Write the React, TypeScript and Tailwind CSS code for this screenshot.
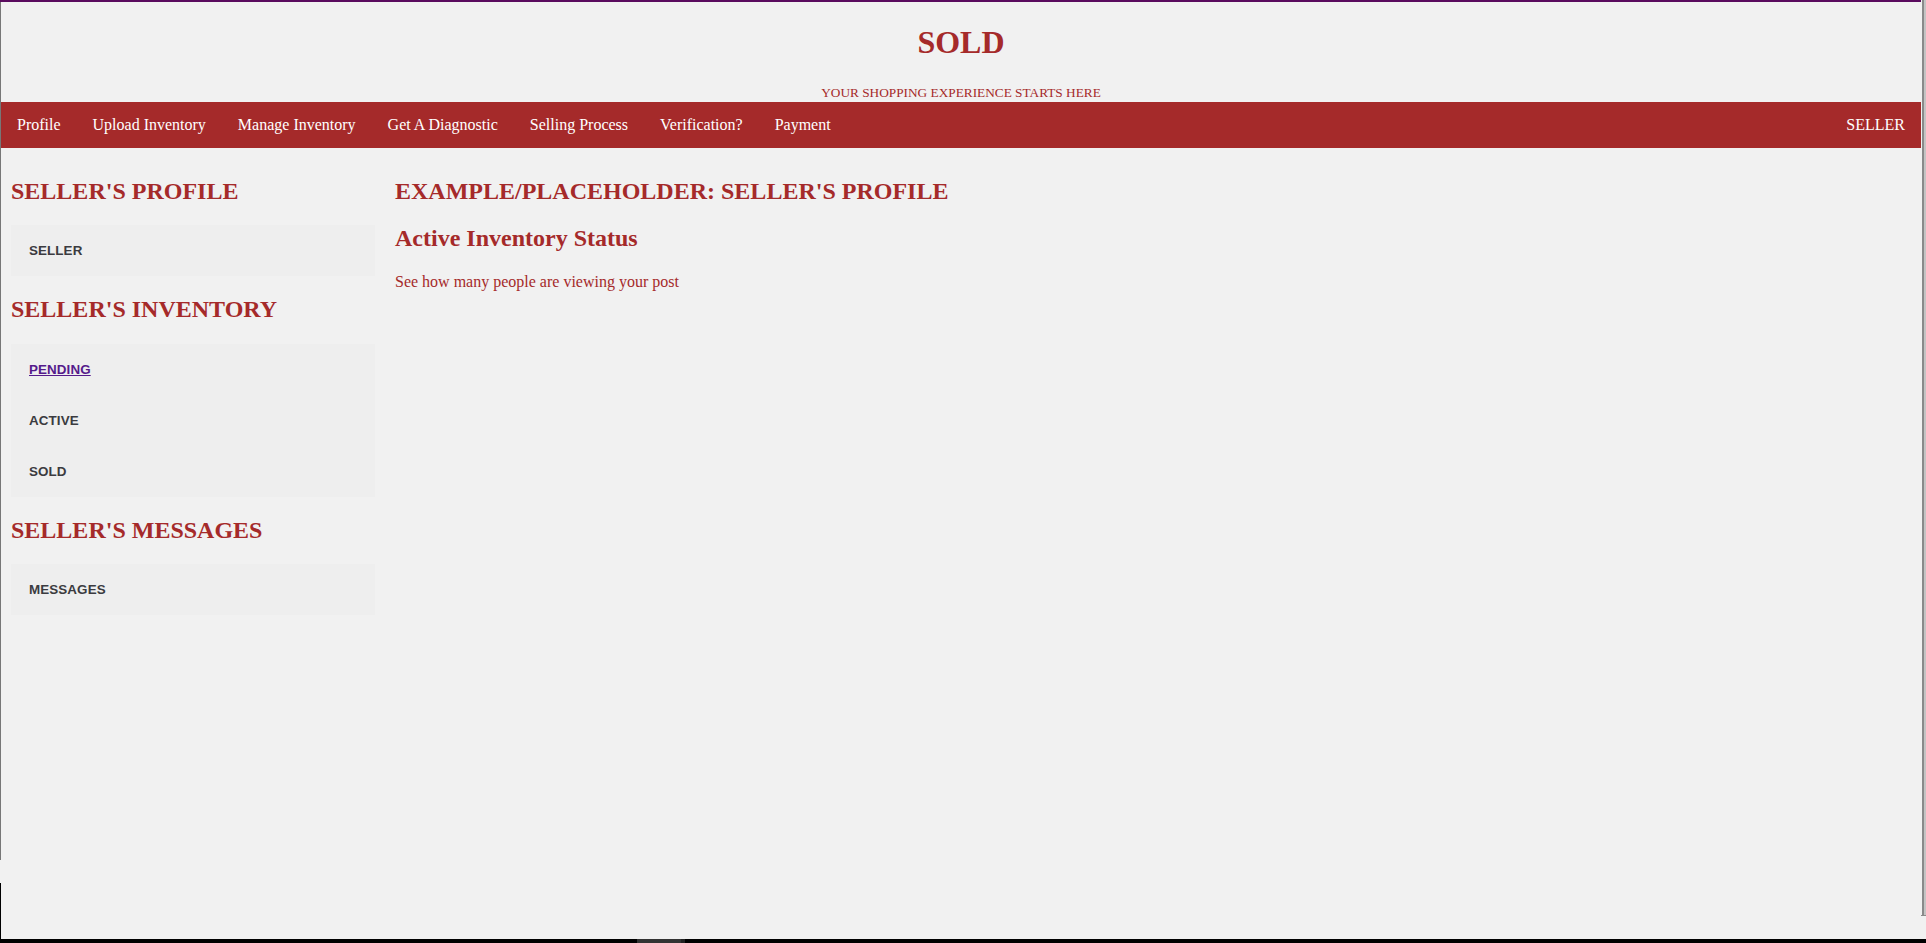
import React from "react";

const NAV_LINKS = [
	"Profile",
	"Upload Inventory",
	"Manage Inventory",
	"Get A Diagnostic",
	"Selling Process",
	"Verification?",
	"Payment",
];

type Section = {
	title: string;
	items: { label: string; visited?: boolean }[];
};

const SECTIONS: Section[] = [
	{ title: "SELLER'S PROFILE", items: [{ label: "SELLER" }] },
	{
		title: "SELLER'S INVENTORY",
		items: [{ label: "PENDING", visited: true }, { label: "ACTIVE" }, { label: "SOLD" }],
	},
	{ title: "SELLER'S MESSAGES", items: [{ label: "MESSAGES" }] },
];

const serif = "font-['Liberation_Serif','Times_New_Roman',serif]";

const SidebarSection: React.FC<{ section: Section }> = ({ section }) => (
	<div>
		<h2 className="my-[19.9px] text-[24px] leading-[27.6px] font-bold text-[#a52a2a]">
			{section.title}
		</h2>
		<ul className="bg-[#eeeeee]">
			{section.items.map((item) => (
				<li key={item.label} className="h-[51px] flex items-center pl-[18px]">
					<a
						href="#"
						className={
							"font-['Liberation_Sans',Arial,sans-serif] text-[13.4px] leading-[15px] font-bold tracking-[0.1px] " +
							(item.visited ? "text-[#551a8b] underline" : "text-[#3b3b40]")
						}
					>
						{item.label}
					</a>
				</li>
			))}
		</ul>
	</div>
);

export default function App() {
	return (
		<div className={`w-[1926px] h-[943px] bg-[#f1f1f1] flex flex-col overflow-hidden ${serif}`}>
			<div className="flex flex-1 min-h-0">
				{/* left window edge */}
				<div className="w-px flex flex-col">
					<div className="h-[2px] bg-[#5a0b5e]" />
					<div className="h-[858px] bg-[#777]" />
					<div className="h-[23px]" />
					<div className="flex-1 bg-black" />
				</div>

				<div className="w-[1920px] flex flex-col border-t-2 border-[#5a0b5e]">
					<header className="pt-[22px] pb-[2px] text-center text-[#a52a2a]">
						<h1 className="text-[32px] leading-[37px] font-bold">SOLD</h1>
						<p className="mt-[24px] text-[13.3px] leading-[15px]">
							YOUR SHOPPING EXPERIENCE STARTS HERE
						</p>
					</header>

					<nav className="h-[46px] bg-[#a52a2a] flex text-white text-[16px]">
						{NAV_LINKS.map((link) => (
							<a key={link} href="#" className="px-4 leading-[46px]">
								{link}
							</a>
						))}
						<a href="#" className="ml-auto px-4 leading-[46px]">
							SELLER
						</a>
					</nav>

					<div className="flex pt-[10px]">
						<aside className="w-[384px] px-[10px]">
							{SECTIONS.map((s) => (
								<SidebarSection key={s.title} section={s} />
							))}
						</aside>
						<main className="flex-1 pl-[10px] text-[#a52a2a]">
							<h2 className="my-[19.9px] text-[24px] leading-[27.6px] font-bold">
								EXAMPLE/PLACEHOLDER: SELLER'S PROFILE
							</h2>
							<h2 className="my-[19.9px] text-[24px] leading-[27.6px] font-bold">
								Active Inventory Status
							</h2>
							<p className="text-[16px] leading-[18.4px]">See how many people are viewing your post</p>
						</main>
					</div>
				</div>

				{/* right window edge */}
				<div className="w-[5px] flex flex-col">
					<div className="h-[915px] flex">
						<div className="w-px bg-[#f1f1f1]" />
						<div className="w-[2px] bg-[#8a8a8a]" />
						<div className="w-[2px] bg-[#c4c4c4]" />
					</div>
					<div className="h-px bg-[#8a8a8a]" />
				</div>
			</div>

			{/* bottom taskbar strip */}
			<div className="h-[4px] bg-black flex">
				<div className="ml-[637px] w-[44px] bg-[#333]" />
				<div className="w-[4px] bg-[#222]" />
			</div>
		</div>
	);
}
